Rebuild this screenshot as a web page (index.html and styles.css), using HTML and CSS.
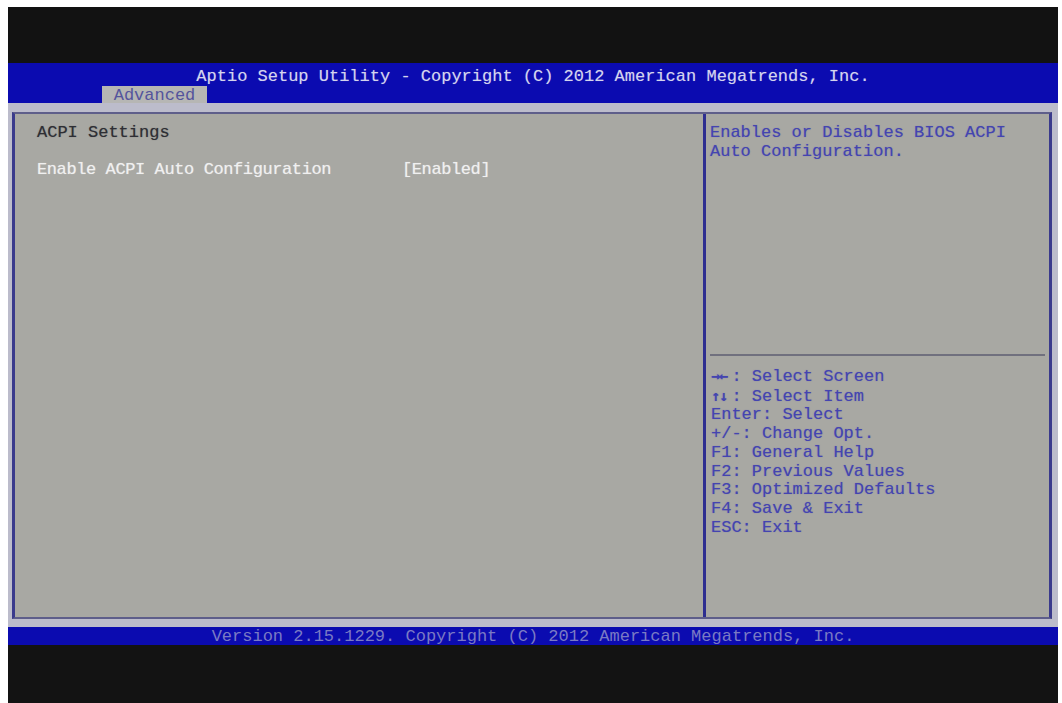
FILE: index.html
```html
<!DOCTYPE html>
<html lang="en">
<head>
  <meta charset="UTF-8">
  <title>Aptio Setup Utility</title>
  <link rel="stylesheet" href="styles.css">
</head>
<body>
  <div class="screen">
    <div class="top-black"></div>

    <!-- Title bar with tab -->
    <div class="header">
      <div class="title">Aptio Setup Utility - Copyright (C) 2012 American Megatrends, Inc.</div>
      <div class="tabs"><span class="tab">Advanced</span></div>
    </div>

    <div class="content">
      <div class="frame">
        <div class="left">
          <p class="section">ACPI Settings</p>
          <p class="blank">&nbsp;</p>
          <div class="option">
            <span class="label">Enable ACPI Auto Configuration</span>
            <span class="value">[Enabled]</span>
          </div>
        </div>

        <div class="right">
          <div class="help">Enables or Disables BIOS ACPI<br>Auto Configuration.</div>
          <hr class="sep">
          <ul class="keys">
            <li><span class="arrows">&rarr;&larr;</span>: Select Screen</li>
            <li><span class="arrows">&uarr;&darr;</span>: Select Item</li>
            <li>Enter: Select</li>
            <li>+/-: Change Opt.</li>
            <li>F1: General Help</li>
            <li>F2: Previous Values</li>
            <li>F3: Optimized Defaults</li>
            <li>F4: Save &amp; Exit</li>
            <li>ESC: Exit</li>
          </ul>
        </div>
      </div>
    </div>

    <div class="footer">Version 2.15.1229. Copyright (C) 2012 American Megatrends, Inc.</div>
    <div class="bottom-black"></div>
  </div>
</body>
</html>
```

FILE: styles.css
```css
html, body {
  height: 100%;
}

body {
  margin: 7px 4px 0 8px;
  background-color: #fff;
  font-family: "Liberation Mono", "DejaVu Sans Mono", monospace;
  font-size: 17px;
  overflow: hidden;
}

.screen {
  display: flex;
  flex-direction: column;
  height: 696px;
}

.top-black {
  height: 56px;
  background-color: #121212;
}

.bottom-black {
  flex: 1;
  background-color: #131313;
}

/* Header */
.header {
  height: 40px;
  background-color: #0b0bb0;
  display: flex;
  flex-direction: column;
}

.title {
  padding-top: 4px;
  line-height: 19px;
  text-align: center;
  color: #d4d4ee;
  text-shadow: 0 0 1px rgba(212, 212, 238, 0.4);
}

.tabs {
  margin-top: auto;
  padding-left: 94px;
}

.tab {
  display: inline-block;
  width: 105px;
  height: 18px;
  line-height: 19px;
  text-align: center;
  background-color: #b6b6b4;
  color: #54549c;
}

/* Main area */
.content {
  height: 524px;
  box-sizing: border-box;
  padding: 9px 6px 8px 4px;
  background-color: #bcbccb;
}

.frame {
  display: flex;
  height: 100%;
  box-sizing: border-box;
  background-color: #a8a8a3;
  border-top: 2px solid #5e5e8a;
  border-bottom: 2px solid #5e5e8a;
  border-left: 3px solid #3a3a8c;
  border-right: 3px solid #3a3a8c;
}

.left {
  width: 688px;
  padding: 10px 0 0 22px;
  box-sizing: border-box;
  line-height: 18.5px;
}

.left p {
  margin: 0;
}

.section {
  color: #2e2e34;
  text-shadow: 0 0 1px rgba(46, 46, 52, 0.5);
}

.option {
  display: flex;
  letter-spacing: -0.4px;
  color: #f0f0f0;
  text-shadow: 0 0 1px rgba(240, 240, 240, 0.6);
}

.label {
  width: 365px;
}

.right {
  flex: 1;
  display: flex;
  flex-direction: column;
  border-left: 3px solid #2e2e90;
  color: #4444b0;
  text-shadow: 0 0 1px rgba(68, 68, 176, 0.5);
}

.help {
  height: 240px;
  box-sizing: border-box;
  padding: 9px 4px 0 4px;
  line-height: 19px;
}

.sep {
  margin: 0 4px;
  border: 0;
  border-top: 2px solid #70707e;
  height: 0;
}

.keys {
  list-style: none;
  margin: 0;
  padding: 11px 4px 0 5px;
  line-height: 18.7px;
}

.arrows {
  display: inline-block;
  width: 20.4px;
  font-family: "DejaVu Sans Mono", monospace;
  font-weight: bold;
  font-size: 15px;
  letter-spacing: -1px;
}

/* Footer */
.footer {
  height: 18px;
  line-height: 19px;
  text-align: center;
  background-color: #0b0bb0;
  color: #7a7ac4;
}
```
